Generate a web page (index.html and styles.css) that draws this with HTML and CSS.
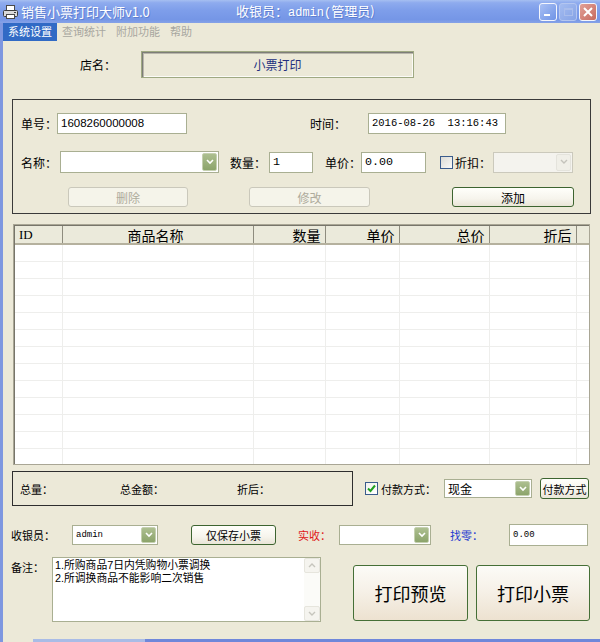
FILE: index.html
```html
<!DOCTYPE html>
<html lang="zh-CN">
<head>
<meta charset="utf-8">
<title>销售小票打印大师v1.0</title>
<link rel="stylesheet" href="styles.css">
</head>
<body>
<div class="window">
  <div class="titlebar">
    <svg class="app-icon" width="15" height="14" viewBox="0 0 15 14">
      <rect x="3.5" y="0.5" width="8" height="5" fill="#fff" stroke="#4a4a4a"/>
      <rect x="0.5" y="5.5" width="14" height="6" rx="1" fill="#d9d9d9" stroke="#3c3c3c"/>
      <rect x="3.5" y="9.5" width="8" height="4" fill="#fff" stroke="#4a4a4a"/>
      <rect x="11" y="7" width="2" height="1" fill="#3c3c3c"/>
    </svg>
    <span class="title">销售小票打印大师v1.0</span>
    <span class="title-user">收银员：<span class="title-mono">admin(</span>管理员)</span>
    <div class="caption-btns">
      <span class="cb cb-min"><span class="min-bar"></span></span>
      <span class="cb cb-max"><span class="max-box"></span></span>
      <span class="cb cb-close">
        <svg width="10" height="10" viewBox="0 0 10 10"><path d="M1 1 L9 9 M9 1 L1 9" stroke="#fff" stroke-width="2"/></svg>
      </span>
    </div>
  </div>
  <div class="frame">
    <div class="menubar">
      <span class="menu-item active">系统设置</span>
      <span class="menu-item">查询统计</span>
      <span class="menu-item">附加功能</span>
      <span class="menu-item">帮助</span>
    </div>
    <div class="client">
      <div class="shop-row">
        <span class="lbl shop-lbl">店名：</span>
        <div class="shop-box">小票打印</div>
      </div>

      <div class="order-group">
        <div class="g-row g-row1">
          <span class="lbl lbl-no">单号：</span>
          <div class="tb tb-no">1608260000008</div>
          <span class="lbl lbl-time">时间：</span>
          <div class="tb tb-time">2016-08-26&nbsp;&nbsp;13:16:43</div>
        </div>
        <div class="g-row g-row2">
          <span class="lbl lbl-name">名称：</span>
          <div class="combo combo-name"><span class="combo-text"></span><span class="combo-btn"><svg width="8" height="6" viewBox="0 0 8 6"><path d="M1 1 L4 4 L7 1" fill="none" stroke="#fff" stroke-width="1.6"/></svg></span></div>
          <span class="lbl lbl-qty">数量：</span>
          <div class="tb tb-qty mono">1</div>
          <span class="lbl lbl-price">单价：</span>
          <div class="tb tb-price mono">0.00</div>
          <span class="chk chk-disc"></span>
          <span class="lbl lbl-disc">折扣：</span>
          <div class="combo combo-disc disabled"><span class="combo-text"></span><span class="combo-btn"><svg width="8" height="6" viewBox="0 0 8 6"><path d="M1 1 L4 4 L7 1" fill="none" stroke="#c4c3bc" stroke-width="1.4"/></svg></span></div>
        </div>
        <div class="g-row g-row3">
          <span class="btn btn-del disabled">删除</span>
          <span class="btn btn-edit disabled">修改</span>
          <span class="btn btn-add">添加</span>
        </div>
      </div>

      <div class="list">
        <table class="grid">
          <colgroup>
            <col class="c-id"><col class="c-name"><col class="c-qty"><col class="c-price"><col class="c-total"><col class="c-after"><col class="c-fill">
          </colgroup>
          <thead>
            <tr>
              <th class="h-left">ID</th>
              <th class="h-center">商品名称</th>
              <th>数量</th>
              <th>单价</th>
              <th>总价</th>
              <th>折后</th>
              <th class="h-fill"></th>
            </tr>
          </thead>
          <tbody>
            <tr><td></td><td></td><td></td><td></td><td></td><td></td><td></td></tr>
            <tr><td></td><td></td><td></td><td></td><td></td><td></td><td></td></tr>
            <tr><td></td><td></td><td></td><td></td><td></td><td></td><td></td></tr>
            <tr><td></td><td></td><td></td><td></td><td></td><td></td><td></td></tr>
            <tr><td></td><td></td><td></td><td></td><td></td><td></td><td></td></tr>
            <tr><td></td><td></td><td></td><td></td><td></td><td></td><td></td></tr>
            <tr><td></td><td></td><td></td><td></td><td></td><td></td><td></td></tr>
            <tr><td></td><td></td><td></td><td></td><td></td><td></td><td></td></tr>
            <tr><td></td><td></td><td></td><td></td><td></td><td></td><td></td></tr>
            <tr><td></td><td></td><td></td><td></td><td></td><td></td><td></td></tr>
            <tr><td></td><td></td><td></td><td></td><td></td><td></td><td></td></tr>
            <tr><td></td><td></td><td></td><td></td><td></td><td></td><td></td></tr>
            <tr><td></td><td></td><td></td><td></td><td></td><td></td><td></td></tr>
          </tbody>
        </table>
      </div>

      <div class="sum-row">
        <div class="sum-box">
          <span class="sum-lbl sum-qty">总量：</span>
          <span class="sum-lbl sum-amount">总金额：</span>
          <span class="sum-lbl sum-after">折后：</span>
        </div>
        <span class="chk checked chk-pay"><svg width="9" height="9" viewBox="0 0 9 9"><path d="M1 4.5 L3.5 7 L8 1.5" fill="none" stroke="#21a121" stroke-width="2"/></svg></span>
        <span class="lbl lbl-pay">付款方式：</span>
        <div class="combo combo-pay"><span class="combo-text">现金</span><span class="combo-btn"><svg width="8" height="6" viewBox="0 0 8 6"><path d="M1 1 L4 4 L7 1" fill="none" stroke="#fff" stroke-width="1.6"/></svg></span></div>
        <span class="btn btn-pay">付款方式</span>
      </div>

      <div class="bottom-row1">
        <span class="lbl lbl-cashier">收银员：</span>
        <div class="combo combo-cashier"><span class="combo-text mono-s">admin</span><span class="combo-btn"><svg width="8" height="6" viewBox="0 0 8 6"><path d="M1 1 L4 4 L7 1" fill="none" stroke="#fff" stroke-width="1.6"/></svg></span></div>
        <span class="btn btn-save">仅保存小票</span>
        <span class="lbl lbl-paid">实收：</span>
        <div class="combo combo-paid"><span class="combo-text"></span><span class="combo-btn"><svg width="8" height="6" viewBox="0 0 8 6"><path d="M1 1 L4 4 L7 1" fill="none" stroke="#fff" stroke-width="1.6"/></svg></span></div>
        <span class="lbl lbl-change">找零：</span>
        <div class="tb tb-change mono-s">0.00</div>
      </div>

      <div class="bottom-row2">
        <span class="lbl lbl-memo">备注：</span>
        <div class="memo">
          <div class="memo-text">
            <div class="memo-line">1.所购商品7日内凭购物小票调换</div>
            <div class="memo-line">2.所调换商品不能影响二次销售</div>
          </div>
          <div class="memo-scroll">
            <span class="sb-btn"><svg width="8" height="5" viewBox="0 0 8 5"><path d="M1 4 L4 1 L7 4" fill="none" stroke="#c6c5bd" stroke-width="1.4"/></svg></span>
            <span class="sb-btn"><svg width="8" height="5" viewBox="0 0 8 5"><path d="M1 1 L4 4 L7 1" fill="none" stroke="#c6c5bd" stroke-width="1.4"/></svg></span>
          </div>
        </div>
        <span class="btn big-btn btn-preview">打印预览</span>
        <span class="btn big-btn btn-print">打印小票</span>
      </div>
    </div>
    <div class="frame-bottom"></div>
  </div>
</div>
</body>
</html>
```

FILE: styles.css
```css
* { box-sizing: border-box; }
html, body { margin: 0; padding: 0; }
body {
  width: 600px;
  height: 642px;
  overflow: hidden;
  background: #ece9d8;
  font-family: "Noto Sans CJK SC", "Noto Sans", sans-serif;
  font-size: 12px;
  color: #000;
}
.window { display: flex; flex-direction: column; height: 642px; }

/* title bar */
.titlebar {
  flex: none;
  height: 23px;
  display: flex;
  align-items: center;
  color: #fff;
  background: linear-gradient(#a6bff1 0%, #8eabee 12%, #7e9eea 45%, #7596e6 85%, #86a2e7 100%);
}
.app-icon { margin-left: 3px; flex: none; }
.title {
  flex: none;
  width: 215px;
  margin-left: 3px;
  font-size: 13px;
  line-height: 16px;
  text-shadow: 1px 1px 0 #5f7fd0;
  white-space: nowrap;
}
.title-user {
  flex: none;
  font-size: 13px;
  line-height: 16px;
  text-shadow: 1px 1px 0 #5f7fd0;
  white-space: nowrap;
}
.title-mono { font-family: "Liberation Mono", "DejaVu Sans Mono", monospace; font-size: 12px; }
.caption-btns { margin-left: auto; margin-right: 3px; display: flex; gap: 2px; }
.cb {
  width: 18px;
  height: 18px;
  border: 1px solid #f4f6fd;
  border-radius: 3px;
  display: flex;
  align-items: center;
  justify-content: center;
}
.cb-min { background: linear-gradient(135deg, #a9c0f4, #6f93e6); position: relative; }
.min-bar { position: absolute; left: 4px; bottom: 4px; width: 6px; height: 2px; background: #fff; }
.cb-max { background: linear-gradient(135deg, #a4bcf0, #86a3e6); border-color: #b4c6f0; }
.max-box { width: 9px; height: 8px; border: 1px solid #a9bdec; border-top-width: 2px; }
.cb-close { background: linear-gradient(135deg, #e2a197, #c66a5f); }

/* frame */
.frame {
  flex: 1;
  display: flex;
  flex-direction: column;
  border-left: 3px solid #7e97e0;
}
.menubar { flex: none; height: 18px; display: flex; }
.menu-item {
  padding: 0 5px;
  font-size: 11px;
  line-height: 17px;
  color: #a8a7a0;
}
.menu-item.active { background: #316ac5; color: #fff; }

.client { flex: 1; display: flex; flex-direction: column; }
.frame-bottom {
  flex: none;
  height: 3px;
  margin-left: 30px;
  background: linear-gradient(90deg, #a9bce6 0, #a9bce6 112px, #6f87da 112px);
}

.lbl { flex: none; white-space: nowrap; }
.mono { font-family: "Liberation Mono", "DejaVu Sans Mono", monospace; font-size: 11.7px; }
.mono-s { font-family: "Liberation Mono", "DejaVu Sans Mono", monospace; font-size: 9px; }

/* shop row */
.shop-row { margin-top: 10px; padding-left: 77px; display: flex; align-items: center; height: 27px; }
.shop-lbl { width: 61px; }
.shop-box {
  width: 273px;
  height: 27px;
  border: 1px solid #9fa982;
  box-shadow: inset 1px 1px 0 #7d7d78, inset 2px 2px 0 #b9b7ab, inset -1px -1px 0 #fbfbf7;
  text-align: center;
  line-height: 25px;
  color: #23307e;
}

/* text box, combo, checkbox */
.tb {
  flex: none;
  height: 21px;
  background: #fff;
  border: 1px solid #a9af92;
  padding: 0 3px;
  line-height: 19px;
  white-space: nowrap;
}
.tb-no { width: 130px; font-family: "Liberation Sans", Arial, sans-serif; font-size: 11.5px; }
.tb-time { width: 138px; font-family: "Liberation Mono", "DejaVu Sans Mono", monospace; font-size: 10.5px; }
.tb-qty { width: 44px; }
.tb-price { width: 65px; }
.tb-change { width: 79px; height: 22px; line-height: 20px; }

.combo {
  flex: none;
  display: flex;
  background: #fff;
  border: 1px solid #a9af92;
  padding: 1px;
}
.combo-text { flex: 1; padding: 0 2px; white-space: nowrap; overflow: hidden; }
.combo-btn {
  width: 15px;
  flex: none;
  display: flex;
  align-items: center;
  justify-content: center;
  border: 1px solid #c5d0b0;
  border-radius: 2px;
  background: linear-gradient(#adbf90, #8ca46b);
}
.combo.disabled { background: #f4f3ee; border-color: #cbc9bc; }
.combo.disabled .combo-btn { background: #f0efe8; border-color: #e4e3dc; }
.combo-name { width: 159px; height: 22px; }
.combo-disc { width: 80px; height: 21px; }
.combo-pay { width: 88px; height: 19px; }
.combo-pay .combo-text { line-height: 15px; }
.combo-cashier { width: 86px; height: 20px; }
.combo-cashier .combo-text { line-height: 16px; }
.combo-paid { width: 92px; height: 20px; }

.chk {
  flex: none;
  width: 13px;
  height: 13px;
  border: 1px solid #3a5c8c;
  background: linear-gradient(135deg, #dcdbd4, #fafaf8);
  display: flex;
  align-items: center;
  justify-content: center;
}

/* buttons */
.btn {
  flex: none;
  display: flex;
  align-items: center;
  justify-content: center;
  border: 1px solid #3d6430;
  border-radius: 3px;
  background: linear-gradient(#fffffb 0%, #f6f4ec 60%, #e9e5d7 100%);
  white-space: nowrap;
}
.btn.disabled { border-color: #cac8bb; background: #f5f4ea; color: #aeab9c; }

/* order group */
.order-group {
  margin-top: 21px;
  margin-left: 9px;
  width: 579px;
  height: 115px;
  border: 1px solid #3a3a3a;
  padding: 13px 0 0 8px;
}
.g-row { display: flex; align-items: center; }
.g-row1 { height: 21px; }
.lbl-no { width: 36px; }
.lbl-time { width: 58px; margin-left: 123px; }
.g-row2 { height: 22px; margin-top: 17px; }
.lbl-name { width: 39px; }
.lbl-qty { width: 39px; margin-left: 11px; }
.lbl-price { width: 36px; margin-left: 12px; }
.chk-disc { margin-left: 14px; }
.lbl-disc { width: 38px; margin-left: 2px; }
.g-row3 { height: 20px; margin-top: 14px; padding-left: 47px; }
.btn-del { width: 120px; height: 20px; }
.btn-edit { width: 121px; height: 20px; margin-left: 61px; }
.btn-add { width: 122px; height: 20px; margin-left: 82px; }

/* list view */
.list {
  margin-top: 10px;
  margin-left: 10px;
  width: 577px;
  height: 241px;
  border: 1px solid #a9a695;
  box-shadow: inset 1px 1px 0 #77756a;
  background: #fff;
  overflow: hidden;
  padding: 1px 0 0 1px;
}
.grid { border-collapse: collapse; table-layout: fixed; width: 575px; }
.c-id { width: 47px; }
.c-name { width: 191px; }
.c-qty { width: 72px; }
.c-price { width: 74px; }
.c-total { width: 90px; }
.c-after { width: 87px; }
.c-fill { width: 14px; }
.grid th {
  height: 18px;
  padding: 0 4px 0 0;
  font-weight: normal;
  font-size: 14px;
  line-height: 16px;
  text-align: right;
  background: #ebeadb;
  border-right: 1px solid #8e8c7e;
  border-bottom: 2px solid #b5b19e;
  white-space: nowrap;
}
.grid th.h-left { text-align: left; padding-left: 4px; font-family: "Liberation Serif", serif; font-size: 13px; }
.grid th.h-center { text-align: center; }
.grid th.h-fill { border-right: none; }
.grid td {
  height: 17px;
  padding: 0;
  border-right: 1px solid #eeeeec;
  border-bottom: 1px solid #eeeeec;
}

/* summary */
.sum-row { display: flex; align-items: center; margin-top: 6px; height: 35px; }
.sum-box {
  margin-left: 9px;
  width: 341px;
  height: 35px;
  border: 1px solid #2e2e2e;
  display: flex;
  align-items: center;
  font-size: 11px;
}
.sum-qty { margin-left: 7px; }
.sum-amount { margin-left: 67px; }
.sum-after { margin-left: 73px; }
.chk-pay { margin-left: 12px; background: linear-gradient(135deg, #f2f2ee, #fff); }
.lbl-pay { width: 63px; margin-left: 3px; font-size: 11px; }
.btn-pay { width: 49px; height: 21px; margin-left: 8px; font-size: 11px; }

/* bottom rows */
.bottom-row1 { display: flex; align-items: center; margin-top: 17px; height: 24px; padding-left: 8px; font-size: 11px; }
.lbl-cashier { width: 61px; }
.btn-save { width: 85px; height: 20px; margin-left: 33px; }
.lbl-paid { width: 41px; margin-left: 22px; color: #e01818; }
.lbl-change { width: 59px; margin-left: 19px; color: #2438d0; }

.bottom-row2 { display: flex; align-items: flex-start; margin-top: 10px; padding-left: 8px; }
.lbl-memo { width: 41px; margin-top: 2px; font-size: 11px; }
.memo {
  width: 269px;
  height: 65px;
  flex: none;
  display: flex;
  background: #fff;
  border: 1px solid #a9af92;
}
.memo-text {
  flex: 1;
  padding: 1px 2px;
  font-family: "Liberation Sans", "Noto Sans CJK SC", sans-serif;
  font-size: 10.8px;
}
.memo-line { height: 12.5px; line-height: 12.5px; white-space: nowrap; }
.memo-scroll {
  width: 16px;
  flex: none;
  display: flex;
  flex-direction: column;
  justify-content: space-between;
  background: #fbfbf8;
}
.sb-btn {
  height: 15px;
  border: 1px solid #e6e5dd;
  border-radius: 2px;
  background: #f5f4ef;
  display: flex;
  align-items: center;
  justify-content: center;
}
.big-btn {
  height: 56px;
  margin-top: 8px;
  font-size: 18px;
  border-color: #456f36;
  background: linear-gradient(#fcfbf7 0%, #f6f1e8 45%, #ede2d0 100%);
}
.btn-preview { width: 115px; margin-left: 32px; }
.btn-print { width: 114px; margin-left: 8px; }
```
